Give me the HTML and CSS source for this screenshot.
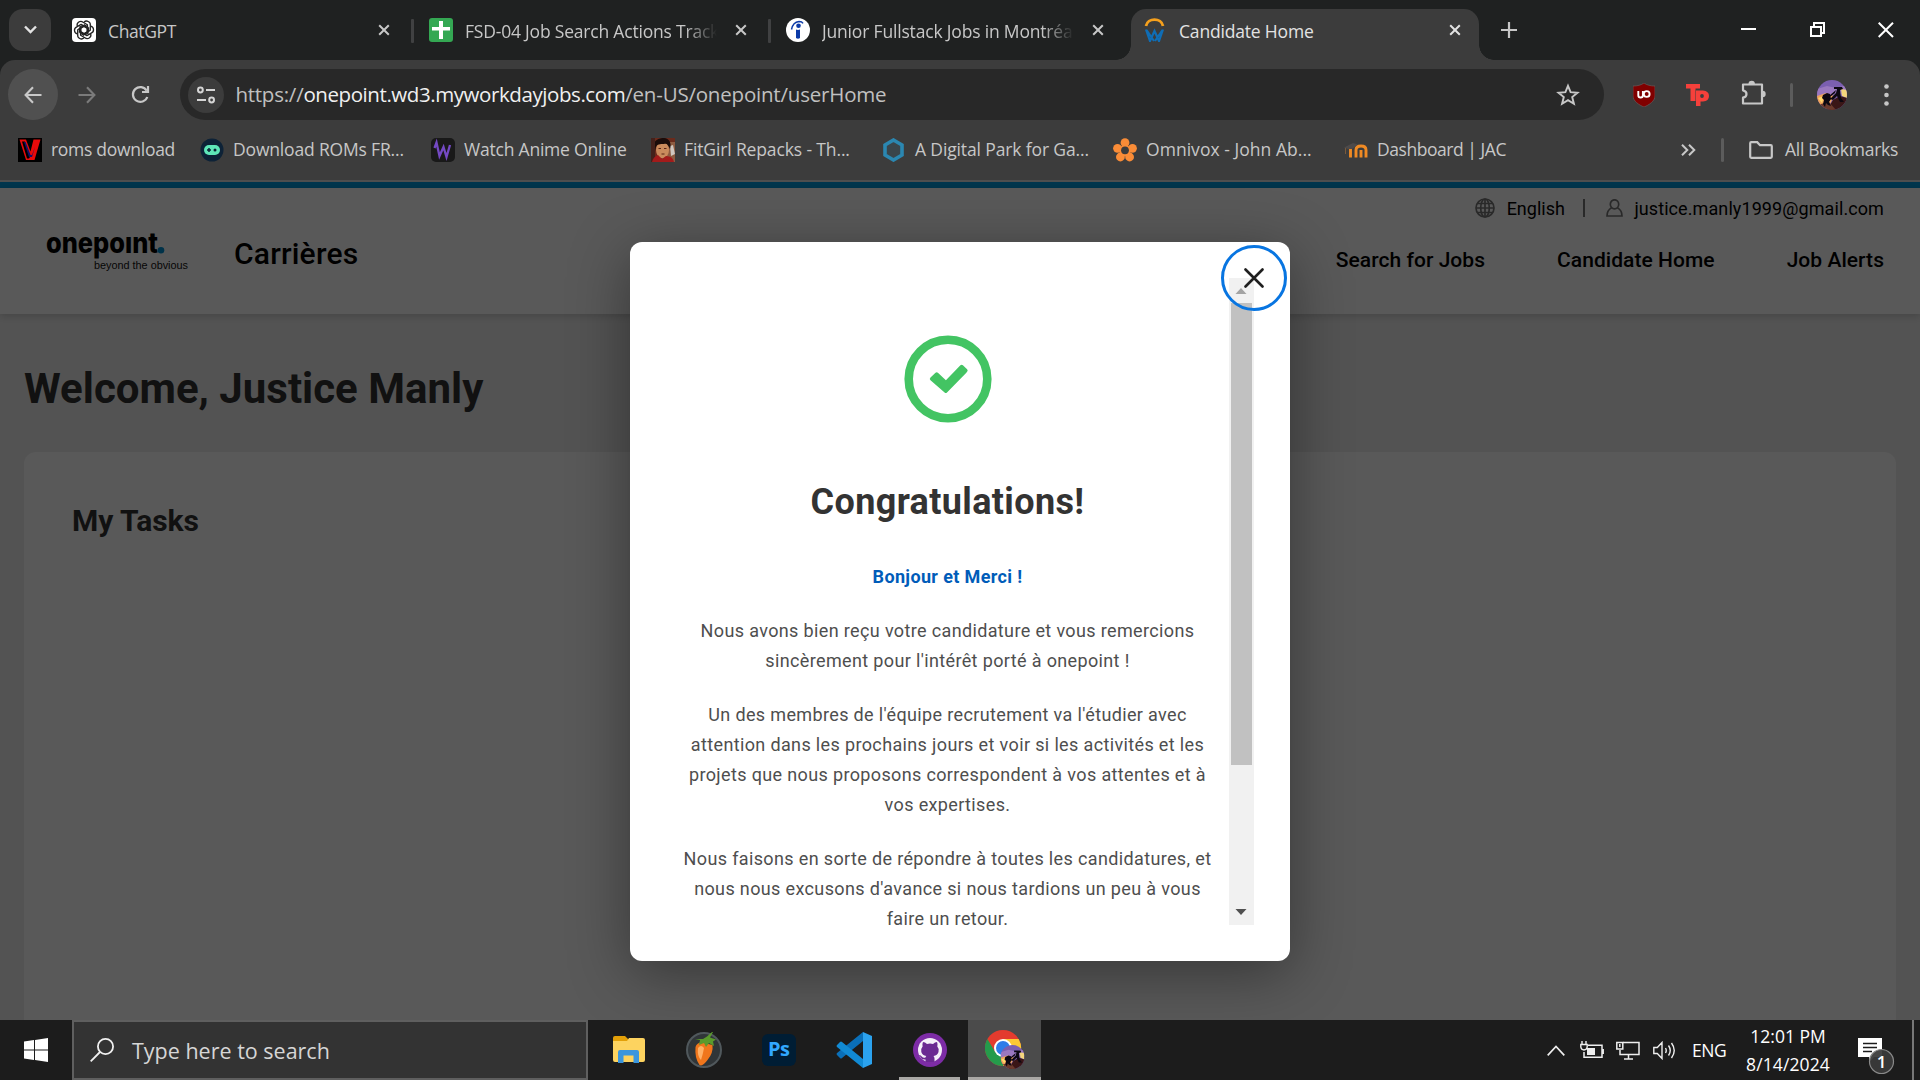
FILE: index.html
```html
<!DOCTYPE html>
<html lang="en">
<head>
<meta charset="utf-8">
<title>Candidate Home</title>
<link rel="stylesheet" href="styles.css">
</head>
<body>
<svg width="0" height="0" class="defs" aria-hidden="true">
  <symbol id="x" viewBox="0 0 12 12"><path d="M1.2 1.2l9.6 9.6M10.8 1.2l-9.6 9.6" fill="none" stroke="currentColor" stroke-width="2"/></symbol>
  <symbol id="avatar" viewBox="0 0 30 30">
    <clipPath id="round"><circle cx="15" cy="15" r="15"/></clipPath>
    <g clip-path="url(#round)">
      <rect width="30" height="30" fill="#7b5fb0"/>
      <path d="M0 9l10-3 9 2 11-3v9L0 17z" fill="#9a78bf"/>
      <path d="M0 16l9-3 8 3-4 8-13 2z" fill="#f0a35a"/>
      <path d="M1 18l6-2-2 7z" fill="#ffd76a"/>
      <path d="M24 9l6 1v8l-5-2z" fill="#f6d67c"/>
      <path d="M10 30l6-10 7-4 7 2v12z" fill="#3a1616"/>
      <path d="M0 25l12-3 7 8H0z" fill="#6b3a2c"/>
      <path d="M6 15l4-2 3 1 1 5-2 3 2 4-3-1-2-2-1 4-2-3 1-4-2-2zM17 7l8 0 1 2-3 1 1 8 3 4h-4l-3-6-4 4-3-1 6-6 1-4-3 0zM12 16l7-6-1 3-5 4z" fill="#0c0811"/>
    </g>
  </symbol>
</svg>

<header class="tabstrip">
  <button class="tab-search" aria-label="Search tabs"><svg width="13" height="9" viewBox="0 0 13 9"><path d="M1 1.5l5.500 5.500L12 1.500" fill="none" stroke="currentColor" stroke-width="2.400"/></svg></button>
  <div class="tab">
    <svg width="24" height="24" viewBox="0 0 24 24"><rect width="24" height="24" rx="4" fill="#fff"/><g fill="none" stroke="#222" stroke-width="1.300" stroke-linejoin="round"><path id="petal" d="M12 4.200a3.700 3.700 0 0 1 6.300 3.100v5l-3.200 1.900V9.600L11 7.300 7.300 9.400"/><use href="#petal" transform="rotate(60 12 12)"/><use href="#petal" transform="rotate(120 12 12)"/><use href="#petal" transform="rotate(180 12 12)"/><use href="#petal" transform="rotate(240 12 12)"/><use href="#petal" transform="rotate(300 12 12)"/></g></svg>
    <span class="tab-title t1">ChatGPT</span>
    <svg class="tab-x"><use href="#x"/></svg>
  </div>
  <div class="tab sep">
    <svg width="24" height="24" viewBox="0 0 24 24"><rect width="24" height="24" rx="3" fill="#34a853"/><path d="M10 3h4v6h7v3.500h-7V21h-4v-8.500H3V9h7z" fill="#fff"/></svg>
    <span class="tab-title fade t2">FSD-04 Job Search Actions Track</span>
    <svg class="tab-x"><use href="#x"/></svg>
  </div>
  <div class="tab sep">
    <svg width="24" height="24" viewBox="0 0 24 24"><circle cx="12" cy="12" r="12" fill="#fff"/><path d="M10 11.500q2 .8 4 0V20q-2 1.500-4 0z" fill="#0b3aa8"/><circle cx="12.500" cy="7.800" r="2.300" fill="#0b3aa8"/><path d="M5.500 11.500Q7 4 13 3.500q3 0 4 1.800" fill="none" stroke="#0b3aa8" stroke-width="1.500"/></svg>
    <span class="tab-title fade t3">Junior Fullstack Jobs in Montréal</span>
    <svg class="tab-x"><use href="#x"/></svg>
  </div>
  <div class="tab active">
    <svg width="24" height="24" viewBox="0 0 24 24"><path d="M3 8C4.500-.5 18.500-.5 20 8" fill="none" stroke="#f5a01d" stroke-width="2.800"/><path d="M3 11.500l4 11.500 4.500-10 4.500 10 4-11.500M3.500 12l7.500 11M12 23l7.500-11" fill="none" stroke="#0f6db5" stroke-width="2.200"/></svg>
    <span class="tab-title t4">Candidate Home</span>
    <svg class="tab-x"><use href="#x"/></svg>
  </div>
  <svg class="new-tab" width="16" height="16" viewBox="0 0 16 16"><path d="M8 0v16M0 8h16" stroke="#c7c7c7" stroke-width="2.200"/></svg>
  <div class="win">
    <svg width="16" height="16" viewBox="0 0 16 16"><path d="M0 7h15" stroke="#fff" stroke-width="2"/></svg>
    <svg width="16" height="16" viewBox="0 0 16 16"><path d="M1 5h10v9H1zM4 4.500V1h10v10h-3" fill="none" stroke="#fff" stroke-width="2"/></svg>
    <svg width="16" height="16" viewBox="0 0 16 16"><path d="M.7.7l14.300 14.300M15 .7L.7 15" stroke="#fff" stroke-width="2"/></svg>
  </div>
</header>

<section class="chrome">
  <div class="toolbar">
    <span class="nav-btn back"><svg width="18" height="18" viewBox="0 0 18 18"><path d="M17.500 9H2M9 1.300L1.600 9 9 16.700" fill="none" stroke="#c9c9c9" stroke-width="2.100"/></svg></span>
    <span class="nav-btn fwd"><svg width="18" height="18" viewBox="0 0 18 18"><path d="M.5 9H16M9 1.300L16.400 9 9 16.700" fill="none" stroke="#7b7b7b" stroke-width="2.100"/></svg></span>
    <span class="nav-btn reload"><svg width="19" height="19" viewBox="0 0 19 19"><path d="M16.300 12a7.400 7.400 0 1 1-.6-6.300" fill="none" stroke="#c7c7c7" stroke-width="2.200"/><path d="M11 7h6V1" fill="none" stroke="#c7c7c7" stroke-width="2.200"/></svg></span>
    <div class="omnibox">
      <span class="site"><svg width="18" height="18" viewBox="0 0 18 18" fill="none" stroke="#d5d5d5" stroke-width="2"><circle cx="3.400" cy="4" r="2.400"/><path d="M9 4h9M0 14h9"/><circle cx="14.600" cy="14" r="2.400"/></svg></span>
      <div class="url"><span class="u1">https://</span><b class="u2">onepoint.wd3.myworkdayjobs.com</b><span class="u3">/en-US/onepoint/userHome</span></div>
      <svg width="24" height="24" viewBox="0 0 24 24"><path d="M12 2.800l2.600 6.400 6.900.5-5.300 4.400 1.700 6.700L12 17.100l-5.900 3.700 1.700-6.700-5.300-4.400 6.900-.5z" fill="none" stroke="#c7c7c7" stroke-width="1.900"/></svg>
    </div>
    <div class="ext">
      <svg class="e1" width="22" height="24" viewBox="0 0 22 24"><path d="M11 0c3 2.200 6.500 3 11 3v10c0 5-6 9-11 11C6 22 0 18 0 13V3c4.500 0 8-.8 11-3z" fill="#800000" stroke="#666" stroke-width=".6"/><path d="M5.300 8v4.200a2.200 2.200 0 0 0 4.600 0V8" fill="none" stroke="#fff" stroke-width="1.900"/><circle cx="13.700" cy="11" r="2.900" fill="none" stroke="#fff" stroke-width="1.900"/></svg>
      <svg class="e2" width="23" height="22" viewBox="0 0 23 22"><path d="M0 0h14v4.500H9.500V17H4.500V4.500H0z" fill="#f5403b"/><path d="M10 6.500h7q6 .5 6 5.500t-6 5.500h-2.500V22H10z" fill="#f5403b"/><circle cx="16" cy="12" r="1.900" fill="#3c3c3c"/></svg>
      <svg class="e3" width="25" height="25" viewBox="0 0 25 25"><path d="M2 4.500h19v19H2v-5.800q3.500-.7 3.500-3.700T2 10.300z" fill="none" stroke="#c7c7c7" stroke-width="2.200" stroke-linejoin="round"/><path d="M7.500 4a3.200 3.200 0 0 1 6.400 0zM21.500 10.800a3.200 3.200 0 0 1 0 6.400z" fill="#c7c7c7"/></svg>
      <i class="bar e4"></i>
      <svg class="e5" width="30" height="30"><use href="#avatar"/></svg>
      <svg class="e6" width="5" height="22" viewBox="0 0 5 22" fill="#c7c7c7"><circle cx="2.500" cy="2.500" r="2.300"/><circle cx="2.500" cy="11" r="2.300"/><circle cx="2.500" cy="19.500" r="2.300"/></svg>
    </div>
  </div>
  <nav class="bookmarks">
    <a><svg width="24" height="24" viewBox="0 0 24 24"><rect width="24" height="24" fill="#000"/><path d="M1.500 1.500H8l4.500 12L15.500 1.500h7l-6 20.500H8z" fill="#e80a0a"/><path d="M4 3.500h2.800l5.500 15-1.300 2H9z" fill="#000"/><path d="M6 4l5 15h3l3-10-3 8h-1.500L7.500 4z" fill="#15106a"/></svg><span class="b1">roms download</span></a>
    <a><svg width="24" height="24" viewBox="0 0 24 24"><circle cx="12" cy="12" r="11.500" fill="#0d2237"/><rect x="4" y="7" width="16" height="10" rx="5" fill="#5ee6b8"/><path d="M7 12h4M9 10v4" stroke="#0d2237" stroke-width="1.500"/><circle cx="15" cy="12" r="1.500" fill="#0d2237"/></svg><span class="b2">Download ROMs FR...</span></a>
    <a><svg width="24" height="24" viewBox="0 0 24 24"><rect width="24" height="24" rx="5" fill="#191919"/><path d="M3.500 10l2-5.500L8.500 18l4-9 3 10 3.500-12" fill="none" stroke="#7449c4" stroke-width="2.300"/></svg><span class="b3">Watch Anime Online</span></a>
    <a><svg width="24" height="24" viewBox="0 0 24 24"><rect width="24" height="24" fill="#6a2b1c"/><path d="M16 4h8v20h-8z" fill="#8d5b40"/><path d="M19 8l3-1 2 9-4 2z" fill="#cfc7c0"/><ellipse cx="11.500" cy="12" rx="6.500" ry="8.500" fill="#c98a5c"/><path d="M3 9C2 2 8 0 13 0s8 5 6 11c-2-4-3-6-6-5-4 0-7 0-8 3l-1 4z" fill="#1a0c0a"/><path d="M0 0h4v24H0z" fill="#43211b"/><path d="M1 24q1-5 6-7l4 4 4-3q7 0 8 6z" fill="#a31b1b"/><path d="M7.500 10.500h2.500M13 10.500h2.500M10.500 16h3" stroke="#5a2415"/></svg><span class="b4">FitGirl Repacks - Th...</span></a>
    <a><svg width="24" height="24" viewBox="0 0 24 24"><path d="M11.500 2l8.500 5v10l-8.500 5L3 17V7z" fill="#3a454b" stroke="#2b87b1" stroke-width="3.600"/></svg><span class="b5">A Digital Park for Ga...</span></a>
    <a><svg width="24" height="24" viewBox="0 0 24 24" fill="#fa8c37"><circle cx="12" cy="4.700" r="4.400"/><circle cx="19.500" cy="10.300" r="4.400"/><circle cx="16.600" cy="19" r="4.400"/><circle cx="7.400" cy="19" r="4.400"/><circle cx="4.500" cy="10.300" r="4.400"/><circle cx="12" cy="12.600" r="5.800"/><circle cx="12" cy="12.300" r="3.900" fill="#3c3c3c"/></svg><span class="b6">Omnivox - John Ab...</span></a>
    <a><svg width="24" height="24" viewBox="0 0 24 24"><path d="M6.500 19.500V10M12 19.500V12q0-4 5-4t5 4v7.500M17 19.500V12" fill="none" stroke="#f08a24" stroke-width="2.900"/><path d="M0 9.500L9 5l5 1.500L8 11l-4 0z" fill="#4d4a4a"/><path d="M1.500 10v6" stroke="#7a5a3a"/></svg><span class="b7">Dashboard | JAC</span></a>
    <div class="bm-end">
      <svg width="15" height="12" viewBox="0 0 15 12"><path d="M1 .7L6.300 6 1 11.300M8 .7L13.300 6 8 11.300" fill="none" stroke="#c7c7c7" stroke-width="2"/></svg>
      <i class="bar"></i>
      <svg width="24" height="18" viewBox="0 0 24 18"><path d="M1.200 2.200q0-1 1-1h6l2.800 3h10.800q1 0 1 1v10.600q0 1-1 1H2.200q-1 0-1-1z" fill="none" stroke="#c7c7c7" stroke-width="2.200"/></svg>
      <span class="b8">All Bookmarks</span>
    </div>
  </nav>
</section>

<main class="page">
  <div class="accent"></div>
  <header class="site-head">
    <svg class="logo" width="142" height="44" viewBox="0 0 142 44"><text x="-1" y="22" class="logo-name" textLength="112" lengthAdjust="spacingAndGlyphs">onepoınt</text><circle cx="114" cy="19.300" r="3.300" fill="#0090d0"/><text x="47" y="38" class="logo-tag" textLength="94" lengthAdjust="spacingAndGlyphs">beyond the obvious</text></svg>
    <span class="brand">Carrières</span>
    <div class="head-right">
      <div class="util">
        <svg width="20" height="20" viewBox="0 0 20 20" fill="none" stroke="#777" stroke-width="1.700"><circle cx="10" cy="10" r="9"/><ellipse cx="10" cy="10" rx="4.300" ry="9"/><path d="M10 1v18M1 10h18M2.500 5.500h15M2.500 14.500h15"/></svg>
        <span>English</span>
        <i></i>
        <svg width="17" height="18" viewBox="0 0 17 18" fill="none" stroke="#777" stroke-width="1.700"><ellipse cx="8.500" cy="5.300" rx="4.200" ry="4.500"/><path d="M5.600 8.800C2.800 10.500 1 12 1 17h15c0-5-1.800-6.500-4.600-8.200"/></svg>
        <span class="mail">justice.manly1999@gmail.com</span>
      </div>
      <nav class="links"><a>Search for Jobs</a><a>Candidate Home</a><a>Job Alerts</a></nav>
    </div>
  </header>
  <h1 class="welcome">Welcome, Justice Manly</h1>
  <section class="card"><h2>My Tasks</h2></section>

  <div class="overlay">
    <div class="modal">
      <div class="modal-body">
        <svg class="ok" width="88" height="88" viewBox="0 0 88 88"><circle cx="44" cy="44" r="39.300" fill="none" stroke="#43c463" stroke-width="8.600"/><path d="M26.500 42.500l5-4.800q1.200-1 2.400 0l8 7.600 14.500-15q1.300-1.200 2.500 0l4.200 4q1.200 1.200 0 2.500l-1 1.200L43 57.500q-1.200 1-2.400 0L26.500 45.300q-1.500-1.400 0-2.800z" fill="#43c463"/></svg>
        <h2>Congratulations!</h2>
        <p class="lead">Bonjour et Merci !</p>
        <p>Nous avons bien reçu votre candidature et vous remercions<br>sincèrement pour l'intérêt porté à onepoint !</p>
        <p>Un des membres de l'équipe recrutement va l'étudier avec<br>attention dans les prochains jours et voir si les activités et les<br>projets que nous proposons correspondent à vos attentes et à<br>vos expertises.</p>
        <p>Nous faisons en sorte de répondre à toutes les candidatures, et<br>nous nous excusons d'avance si nous tardions un peu à vous<br>faire un retour.</p>
      </div>
      <div class="scroll">
        <svg width="25" height="25" viewBox="0 0 25 25"><path d="M6.500 16l5.500-6 5.500 6z" fill="#a3a3a3"/></svg>
        <i></i>
        <svg width="25" height="25" viewBox="0 0 25 25"><path d="M6.500 9l5.500 6 5.500-6z" fill="#505050"/></svg>
      </div>
      <button class="close" aria-label="Close"><svg width="20" height="20" viewBox="0 0 20 20"><path d="M1.500 1.500l17 17M18.500 1.500l-17 17" stroke="#1f1f1f" stroke-width="2.600" stroke-linecap="round"/></svg></button>
    </div>
  </div>
</main>

<footer class="taskbar">
  <span class="start"><svg width="24" height="24" viewBox="0 0 24 24" fill="#fff"><path d="M0 3.400l10-1.400v9.500H0zM11 1.900L24 0v11.500H11zM0 12.500h10V22L0 20.600zM11 12.500h13V24l-13-1.900z"/></svg></span>
  <div class="search"><svg width="24" height="24" viewBox="0 0 24 24" fill="none" stroke="#f0f0f0" stroke-width="1.800"><circle cx="15.500" cy="8.500" r="7.600"/><path d="M10 14L.7 23.300"/></svg><span class="s1">Type here to search</span></div>
  <div class="apps">
    <span><svg width="32" height="28" viewBox="0 0 32 28"><path d="M0 2q0-2 2-2h10l3 3v4H0z" fill="#e3a008"/><path d="M0 5h14l2-3h14q2 0 2 2v20q0 2-2 2H2q-2 0-2-2z" fill="#fdd35f"/><path d="M5 27V16q0-2 2-2h17q2 0 2 2v11h-5.500v-7.500h-10V27z" fill="#3b96dd"/></svg></span>
    <span><svg width="36" height="36" viewBox="0 0 36 36"><circle cx="18" cy="18" r="17" fill="#303538" stroke="#50585c" stroke-width="2"/><path d="M9.500 15q2-6 9-4l8 2q1 8-5 15-5 7-8 5-5-7-4-18z" fill="#f0761c"/><path d="M12 16q3-4 6 0-1 6-3 12-4-4-3-12z" fill="#ffb066"/><path d="M9 7l8 0 4-2.500L26 0h1l-3 5.500 6 2-3 2 1 4.500-5-3-3 4-2-4-5 2 1-5z" fill="#5a9a2c"/></svg></span>
    <span><svg width="34" height="32" viewBox="0 0 34 32"><rect width="34" height="32" rx="6" fill="#001d34"/><text x="6" y="22" class="ps" textLength="22">Ps</text></svg></span>
    <span><svg width="36" height="36" viewBox="0 0 36 36"><path d="M1 23l3 3q1 1 2 0L27 9V0L1 21q-1 1 0 2z" fill="#0a6fb8"/><path d="M1 13l3-3q1-1 2 0l21 17v9L1 15q-1-1 0-2z" fill="#118ad4"/><path d="M27 0l9 4v28l-9 4z" fill="#2ba2ee"/></svg></span>
    <span class="running"><svg width="34" height="34" viewBox="0 0 34 34"><circle cx="17" cy="17" r="17" fill="#7d2ca6"/><circle cx="17" cy="17" r="12" fill="#f5f0f9"/><path d="M10 9q2 0 4 2 3-1 6 0 2-2 4-2 1 2 .3 4.500 2 2 1.200 5.500-1 3.500-5 4 1 1 1 2.500V29h-9v-2.500q-4 .5-5-2.500-.5-1-2-1.800 2-.5 3.500 1.500 1.200 1.500 3.500.8.100-1 .8-1.500-4-.5-5-4-.6-3.500 1.300-5.500Q9 11 10 9z" fill="#6b2a92"/></svg></span>
    <span class="running current"><svg width="42" height="40" viewBox="0 0 42 40"><circle cx="18" cy="18" r="18" fill="#e33b2e"/><path d="M2.400 9a18 18 0 0 0 15.600 27l7-13.500-14.500 0z" fill="#259b4b"/><path d="M18 9h15.600a18 18 0 0 1-15.600 27l7.800-13.500z" fill="#fcc934"/><circle cx="18" cy="18" r="9" fill="#fff"/><circle cx="18" cy="18" r="7" fill="#2f7de9"/><svg x="15.500" y="15" width="24" height="24"><use href="#avatar"/></svg></svg></span>
  </div>
  <div class="tray">
    <svg width="18" height="11" viewBox="0 0 18 11"><path d="M.7 10.300L9 1.500l8.300 8.800" fill="none" stroke="#eee" stroke-width="1.700"/></svg>
    <svg class="bat" width="24" height="18" viewBox="0 0 24 18"><path d="M8 4.200h14v12H4V11M23.200 8v5" fill="none" stroke="#eee" stroke-width="1.500"/><path d="M7 7h8v7H7z" fill="#eee"/><path d="M2 0v3M6 0v3M.8 3.500h6.400V6q-.5 3-3.200 3T.8 6z" fill="#1c1c1c" stroke="#eee" stroke-width="1.400"/></svg>
    <svg class="mon" width="24" height="19" viewBox="0 0 24 19" fill="none" stroke="#eee" stroke-width="1.500"><path d="M7 1.500h16v12H4V9M12.500 14v4M8 18h9"/><path d="M.8 1.500h6V8h-6zM3.800 3v3"/></svg>
    <svg class="vol" width="23" height="19" viewBox="0 0 23 19" fill="none" stroke="#eee" stroke-width="1.400"><path d="M.8 6.500h3.500L9 1.500v16l-4.700-5H.8zM12.500 7q1.500 2.500 0 5M15.500 4.500q3.500 5 0 10M18.500 2q5.500 7.500 0 15"/></svg>
    <span class="lang">ENG</span>
    <div class="clock"><span class="k2">12:01 PM</span><span class="k3">8/14/2024</span></div>
    <div class="note"><svg width="37" height="37" viewBox="0 0 37 37"><path d="M0 0h24v19h-8l-5 5v-5H0z" fill="#fff"/><path d="M5 5.500h14M5 9.500h14M5 13.500h9" stroke="#1c1c1c" stroke-width="1.400"/><circle cx="23.500" cy="23.500" r="12" fill="#3a3a3a" fill-opacity=".94" stroke="#8a8a8a" stroke-width="1.200"/><text x="23.500" y="29.500" text-anchor="middle" class="count">1</text></svg></div>
    <i class="desk"></i>
  </div>
</footer>
</body>
</html>
```
FILE: styles.css
```css
* { box-sizing: border-box; margin: 0; padding: 0; }
body { width: 1920px; height: 1080px; overflow: hidden; display: flex; flex-direction: column; background: #1f2121; font-family: "Open Sans", "Noto Sans", sans-serif; }
svg { display: block; flex: none; }
button { border: 0; background: none; }
span, a, b { white-space: nowrap; }
.defs { position: absolute; }

/* Browser tab strip */
.tabstrip { height: 60px; display: flex; align-items: flex-start; padding: 9px 26px 0 9px; background: #1f2121; color: #c7c7c7; font-size: 17.5px; }
.tab-search { width: 42px; height: 42px; border-radius: 14px; background: #3c3c3c; color: #e3e3e3; display: grid; place-items: center; margin-right: 9px; padding-bottom: 1px; }
.tab { width: 357px; height: 51px; display: flex; align-items: center; padding: 0 27px 9px 12px; position: relative; }
.tab.sep::before { content: ""; position: absolute; left: -6px; top: 10px; width: 3px; height: 24px; background: #404142; border-radius: 1px; }
.tab-title { margin-left: 12px; padding-top: 1px; width: 252px; overflow: hidden; line-height: 30px; }
.tab-title.fade { -webkit-mask-image: linear-gradient(90deg, #000 220px, transparent 252px); mask-image: linear-gradient(90deg, #000 220px, transparent 252px); }
.t1 { letter-spacing: -.37px; }
.t2 { letter-spacing: -.2px; }
.t3 { letter-spacing: -.18px; }
.t4 { letter-spacing: -.18px; }
.tab-x { width: 12px; height: 12px; margin-left: 18px; }
.tab.active { width: 348px; background: #3c3c3c; border-radius: 15px 15px 0 0; color: #e3e3e3; padding: 0 18px 9px 12px; }
.tab.active::before, .tab.active::after { content: ""; position: absolute; bottom: 0; width: 15px; height: 15px; }
.tab.active::before { left: -15px; background: radial-gradient(circle at 0 0, transparent 14.500px, #3c3c3c 15px); }
.tab.active::after { right: -15px; background: radial-gradient(circle at 100% 0, transparent 14.500px, #3c3c3c 15px); }
.new-tab { margin: 13px 0 0 22px; }
.win { margin: 13px 0 0 auto; display: flex; gap: 52.500px; }

/* Toolbar and bookmarks */
.chrome { height: 122px; background: #3c3c3c; border-radius: 15px 15px 0 0; border-bottom: 2px solid #4e4e4e; }
.toolbar { height: 69px; padding: 9px 31px 9px 8px; display: flex; align-items: center; }
.nav-btn { width: 50px; height: 51px; border-radius: 50%; display: grid; place-items: center; }
.back { background: #505050; }
.fwd { margin-left: 4px; }
.reload { margin-left: 4px; margin-right: 14px; }
.omnibox { width: 1425px; height: 51px; border-radius: 26px; background: #282828; display: flex; align-items: center; padding: 0 24px 0 8px; }
.site { width: 36px; height: 36px; border-radius: 50%; background: #3c3c3c; display: grid; place-items: center; }
.url { flex: 1; display: flex; margin: -2px 0 0 11.5px; font-size: 20.5px; line-height: 30px; color: #c0c0c0; }
.url b { font-weight: 400; color: #f0f0f0; }
.u1 { letter-spacing: -.24px; }
.u2 { letter-spacing: -.42px; }
.u3 { letter-spacing: -.2px; }
.ext { display: flex; align-items: center; }
.e1 { margin-left: 29px; }
.e2 { margin-left: 31px; }
.e3 { margin: 0 0 4px 32px; }
.e4 { margin-left: 24px; }
.e5 { margin-left: 24px; }
.e6 { margin-left: 37px; }
.bar { width: 3px; height: 24px; background: #5c5c5c; border-radius: 2px; }
.bookmarks { height: 51px; padding: 6px 22px 0 18px; display: grid; grid-template-columns: 182px 231px 220px 231px 231px 231px 200px 1fr; color: #c7c7c7; font-size: 17.5px; line-height: 30px; }
.bookmarks a { display: flex; gap: 9px; align-items: center; height: 30px; }
.bookmarks span { margin-top: -2px; }
.b1 { letter-spacing: -.28px; }
.b2 { letter-spacing: -.17px; }
.b3 { letter-spacing: -.21px; }
.b4 { letter-spacing: -.13px; }
.b5 { letter-spacing: -.13px; }
.b6 { letter-spacing: .04px; }
.b7 { letter-spacing: -.45px; }
.b8 { letter-spacing: -.28px; }
.bm-end { display: flex; align-items: center; height: 30px; justify-content: flex-end; gap: 25px; }
.bm-end span { margin-left: -13px; }

/* Career site */
.page { height: 838px; position: relative; background: #eee; font-family: Roboto, sans-serif; color: #333; overflow: hidden; }
.accent { height: 6px; background: #009ade; }
.site-head { height: 126px; background: #fff; box-shadow: 0 2px 8px rgba(0,0,0,.18); display: flex; padding: 0 36px 0 47px; color: #000; position: relative; }
.logo { margin-top: 43px; overflow: visible; }
.logo-name { font: 800 28px Inter, sans-serif; fill: #000; }
.logo-tag { font: 500 11.5px "Liberation Sans", sans-serif; fill: #111; }
.brand { margin: 48px 0 0 45px; font-size: 30px; line-height: 36px; font-weight: 500; letter-spacing: .2px; }
.head-right { margin-left: auto; padding-top: 5px; display: flex; flex-direction: column; align-items: flex-end; }
.util { display: flex; align-items: center; height: 30px; font-size: 18px; }
.util i { width: 2px; height: 18px; background: #777; margin: 0 21px 0 18px; }
.util span { margin-left: 11.5px; }
.mail { letter-spacing: .09px; }
.links { display: flex; gap: 72px; margin-top: 22px; font-size: 21px; line-height: 30px; font-weight: 500; letter-spacing: .05px; }
.welcome { margin: 50px 0 0 24px; font-size: 42px; line-height: 50px; font-weight: 700; }
.card { margin: 38px 24px 0; height: 600px; border-radius: 12px; background: #fff; padding: 51px 48px; }
.card h2 { font-size: 30px; line-height: 36px; font-weight: 700; letter-spacing: -.05px; }

/* Confirmation dialog */
.overlay { position: absolute; inset: 0; background: rgba(0,0,0,.65); display: flex; align-items: center; justify-content: center; }
.modal { position: relative; width: 660px; height: 719px; background: #fff; border-radius: 12px; padding: 36px; display: flex; box-shadow: 0 12px 60px rgba(0,0,0,.4); }
.modal-body { width: 563px; height: 647px; overflow: hidden; padding-top: 57px; text-align: center; font-size: 18px; line-height: 30px; letter-spacing: .36px; color: #4e4e4e; }
.ok { margin: 0 auto; }
.modal-body h2 { margin: 58px 0 39px; font-size: 36px; line-height: 42px; font-weight: 700; color: #333; }
.modal-body p { margin-bottom: 24px; }
.modal-body .lead { font-weight: 700; color: #005cb9; }
.scroll { width: 25px; height: 647px; background: #f1f1f1; display: flex; flex-direction: column; align-items: center; }
.scroll i { width: 21px; height: 462px; background: #c1c1c1; margin-bottom: auto; }
.close { position: absolute; right: 3px; top: 3px; width: 66px; height: 66px; border: 3px solid #0875e1; border-radius: 50%; display: grid; place-items: center; }

/* Windows taskbar */
.taskbar { height: 60px; background: #1c1c1c; display: flex; color: #fff; }
.start { width: 72px; display: grid; place-items: center; }
.search { width: 516px; border: 2px solid #5f5f5f; background: #333; display: flex; align-items: center; gap: 18px; padding-left: 16px; font-size: 21.5px; line-height: 30px; color: #d6d6d6; }
.s1 { padding-top: 2px; }
.apps { display: flex; padding-left: 3px; }
.apps > span { width: 75px; display: grid; place-items: center; }
.apps > .running { box-shadow: inset 0 -3px #aaa8a5; width: 61px; margin: 0 4px 0 8px; }
.apps > .current { width: 73px; margin: 0 0 0 4px; padding-left: 3px; background: #4b4b4b; }
.ps { font: 700 20px "Open Sans", sans-serif; fill: #31a8ff; }
.tray { margin-left: auto; display: flex; align-items: center; font-size: 17.5px; }
.bat { margin-left: 15px; }
.mon { margin-left: 12px; }
.vol { margin-left: 13px; }
.lang { margin-left: 16px; width: 35px; letter-spacing: -.4px; }
.clock { width: 86px; margin: 0 0 0 18px; display: flex; flex-direction: column; align-items: center; line-height: 28px; }
.k3 { letter-spacing: .12px; }
.note { margin: 13px 0 0 27px; }
.count { font: 600 17px "Open Sans", sans-serif; fill: #fff; }
.desk { width: 2px; height: 60px; background: #777; margin: 0 6px 0 17px; }
```
